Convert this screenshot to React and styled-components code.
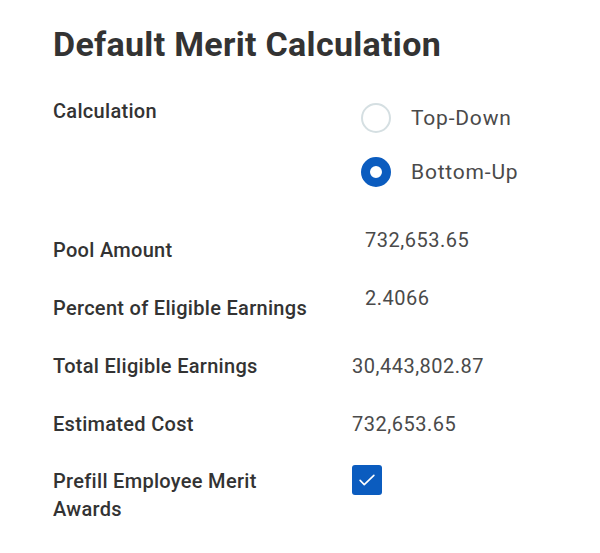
import React, { useState } from "react";
import styled, { createGlobalStyle } from "styled-components";

const GlobalStyle = createGlobalStyle`
  html, body {
    margin: 0;
    padding: 0;
    background: #ffffff;
  }
  body {
    font-family: Roboto, "Liberation Sans", sans-serif;
  }
`;

const Panel = styled.div`
  padding: 24px 53px 0 53px;
  width: 600px;
  box-sizing: border-box;
`;

const Title = styled.h1`
  margin: 0 0 33px 0;
  font-size: 34px;
  font-weight: 700;
  letter-spacing: 0.3px;
  color: #333333;
  line-height: 40px;
`;

const Row = styled.div`
  display: grid;
  grid-template-columns: 299px 1fr;
  align-items: start;
  margin-bottom: ${(p) => p.gap ?? 30}px;
`;

const Label = styled.div`
  font-size: 20px;
  font-weight: 500;
  letter-spacing: 0.3px;
  color: #333333;
  line-height: 28px;
  padding-top: ${(p) => p.offset || 0}px;
`;

const Value = styled.div`
  font-size: 20px;
  letter-spacing: 0.5px;
  color: #4a4a4a;
  line-height: 28px;
  padding-left: ${(p) => p.indent || 0}px;
`;

const RadioGroup = styled.div`
  display: flex;
  flex-direction: column;
  gap: 24px;
  padding-left: 9px;
  padding-top: 6px;
`;

const RadioOption = styled.label`
  display: flex;
  align-items: center;
  gap: 20px;
  font-size: 21px;
  letter-spacing: 0.8px;
  color: #4a4a4a;
  cursor: pointer;
  height: 30px;
`;

const Circle = styled.span`
  width: 30px;
  height: 30px;
  box-sizing: border-box;
  border-radius: 50%;
  border: ${(p) => (p.checked ? "9px solid #0b5cbf" : "2px solid #d5dfe2")};
  background: #ffffff;
`;

const Check = styled.span`
  width: 30px;
  height: 30px;
  margin-top: -2px;
  border-radius: 3px;
  background: #0b5cbf;
  display: flex;
  align-items: center;
  justify-content: center;
`;

export default function App() {
  const [mode, setMode] = useState("bottom");
  return (
    <>
      <GlobalStyle />
      <Panel>
        <Title>Default Merit Calculation</Title>
        <Row gap={39}>
          <Label>Calculation</Label>
          <RadioGroup>
            <RadioOption onClick={() => setMode("top")}>
              <Circle checked={mode === "top"} />
              Top-Down
            </RadioOption>
            <RadioOption onClick={() => setMode("bottom")}>
              <Circle checked={mode === "bottom"} />
              Bottom-Up
            </RadioOption>
          </RadioGroup>
        </Row>
        <Row gap={20}>
          <Label offset={10}>Pool Amount</Label>
          <Value indent={13}>732,653.65</Value>
        </Row>
        <Row gap={30}>
          <Label offset={10}>Percent of Eligible Earnings</Label>
          <Value indent={13}>2.4066</Value>
        </Row>
        <Row gap={30}>
          <Label>Total Eligible Earnings</Label>
          <Value>30,443,802.87</Value>
        </Row>
        <Row gap={29}>
          <Label>Estimated Cost</Label>
          <Value>732,653.65</Value>
        </Row>
        <Row gap={0}>
          <Label>
            Prefill Employee Merit
            <br />
            Awards
          </Label>
          <Check>
            <svg width="22" height="22" viewBox="0 0 24 24" fill="none">
              <path
                d="M4.5 12.5l4.5 4.5L19.5 7"
                stroke="#ffffff"
                strokeWidth="1.8"
                strokeLinecap="round"
                strokeLinejoin="round"
              />
            </svg>
          </Check>
        </Row>
      </Panel>
    </>
  );
}
